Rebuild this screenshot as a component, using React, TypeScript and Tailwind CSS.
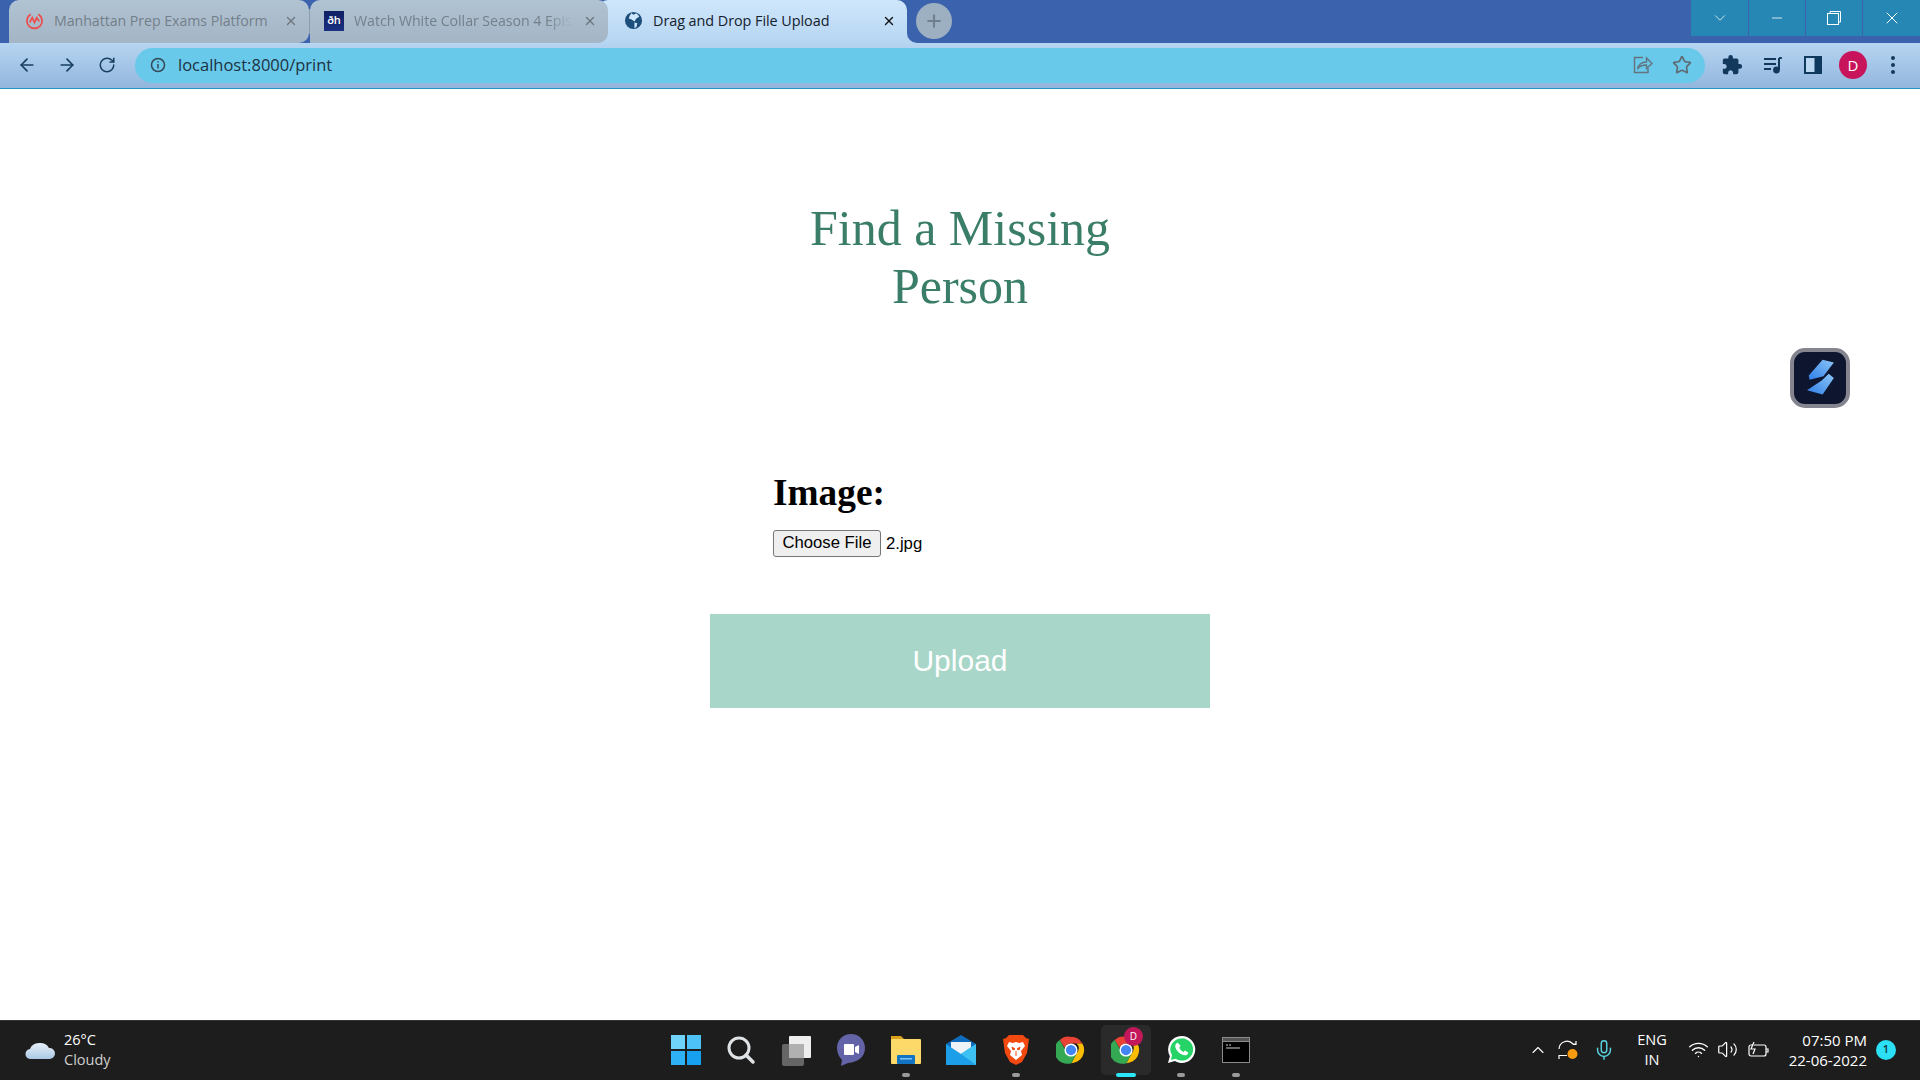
import React from "react";
import { ArrowLeft, ArrowRight, RotateCw, Star, ChevronDown, Minus, X, Plus, Mic, ChevronUp, Wifi, Volume2 } from "lucide-react";
import { MdExtension } from "react-icons/md";

const ui = "font-['Open_Sans','Noto_Sans',sans-serif]";

function ChromeIcon({ size = 32 }: { size?: number }) {
  return (
    <svg width={size} height={size} viewBox="0 0 48 48">
      <path d="M24 3a21 21 0 0 1 18.2 10.5H24a10.5 10.5 0 0 0-10 7.2L6 7.9A21 21 0 0 1 24 3z" fill="#ea4335" />
      <path d="M42.2 13.5A21 21 0 0 1 24.6 45L33.2 29A10.5 10.5 0 0 0 33 13.5z" fill="#fbbc04" />
      <path d="M24.6 45A21 21 0 0 1 6 7.9L15 24a10.5 10.5 0 0 0 18.2 5z" fill="#34a853" />
      <circle cx="24" cy="24" r="10.5" fill="#fff" />
      <circle cx="24" cy="24" r="8.2" fill="#4285f4" />
    </svg>
  );
}

function Tab({ icon, title, active, fade }: { icon: React.ReactNode; title: string; active?: boolean; fade?: boolean }) {
  return (
    <div className={active
      ? "relative -ml-[10px] flex h-[43px] w-[309px] items-center rounded-t-[10px] bg-gradient-to-b from-[#cfe7fc] to-[#b6d5f1] pb-[2px] pl-[25px] pr-[11px]"
      : fade
        ? "relative z-10 flex h-[43px] w-[298px] items-center rounded-t-[10px] rounded-br-[10px] bg-gradient-to-b from-[#b0c3d3] to-[#a4b5c5] pb-[2px] pl-[14px] pr-[11px]"
        : "relative z-10 flex h-[43px] w-[300px] items-center rounded-t-[10px] rounded-br-[10px] bg-gradient-to-b from-[#b0c3d3] to-[#a4b5c5] pb-[2px] pl-[15px] pr-[11px]"}>
      <span className="flex w-[20px] shrink-0 justify-center">{icon}</span>
      <span className={(active
        ? "ml-[10px] w-[219px] overflow-hidden whitespace-nowrap text-[14.4px] tracking-[-0.05px] text-[#14202c]"
        : "ml-[10px] w-[219px] overflow-hidden whitespace-nowrap text-[14.2px] tracking-[-0.05px] text-[#747f89]")
        + (fade ? " [mask-image:linear-gradient(to_right,black_88%,transparent)]" : "")}>{title}</span>
      <X size={14} strokeWidth={2.4} className={active ? "ml-auto text-[#111]" : "ml-auto text-[#6d757d]"} />
      {active && (
        <div className="absolute bottom-0 right-[-10px] h-[10px] w-[10px] bg-[#b6d5f1]">
          <div className="h-full w-full rounded-bl-[10px] bg-[#3a62ad]" />
        </div>
      )}
    </div>
  );
}

function TaskIcon({ children, mark, selected }: { children: React.ReactNode; mark?: "run" | "active"; selected?: boolean }) {
  return (
    <div className="relative flex h-[59px] w-[55px] items-center justify-center pb-[2px]">
      {selected && <div className="absolute left-[2px] top-[4px] h-[50px] w-[50px] rounded-[5px] bg-[#2a2a2a]" />}
      <div className="relative flex h-[36px] w-[36px] items-center justify-center">{children}</div>
      {mark === "run" && <div className="absolute bottom-[3px] left-[23px] h-[4px] w-[8px] rounded-full bg-[#9a9a9a]" />}
      {mark === "active" && <div className="absolute bottom-[3px] left-[17px] h-[4px] w-[20px] rounded-full bg-[#2be6f7]" />}
    </div>
  );
}

export default function App() {
  return (
    <div className={"flex h-screen w-full flex-col overflow-hidden bg-white " + ui}>
      {/* tab strip */}
      <div className="flex h-[43px] shrink-0 items-start bg-[#3a62ad]">
        <div className="ml-[9px] flex">
          <Tab title="Manhattan Prep Exams Platform" icon={
            <svg width="19" height="19" viewBox="0 0 20 20" fill="none" stroke="#ef4a4a" strokeWidth="1.8">
              <path d="M6 3.4A8 8 0 1 0 14 3.4" /><path d="M5 12l2.6-5 2.4 5 2.4-5 2.6 4" />
            </svg>} />
          <div className="relative z-20 my-[9px] w-px bg-[#8e9dab]" />
          <Tab fade title="Watch White Collar Season 4 Epis" icon={
            <span className="flex h-[20px] w-[20px] items-center justify-center bg-gradient-to-b from-[#0f1f63] to-[#1a2f80] text-[11px] font-semibold text-white">ðh</span>} />
          <Tab active title="Drag and Drop File Upload" icon={
            <svg width="19" height="19" viewBox="0 0 20 20">
              <circle cx="10" cy="10" r="9" fill="#1d4f7c" />
              <path d="M8 2c1 2 3 2 4 1s3 1 4 3l-3 2-2 3-3-2-3-1 1-3zM11 12l3 1-1 4-2 1z" fill="#cfe7fc" />
            </svg>} />
        </div>
        <div className="ml-[9px] mt-[3px] flex h-[36px] w-[36px] items-center justify-center rounded-full bg-[#9db0c2]">
          <Plus size={20} strokeWidth={2.5} className="text-[#6f7f8e]" />
        </div>
        <div className="ml-auto flex h-[36px] bg-[#2687b4] text-white">
          <div className="flex h-full w-[58px] items-center justify-center border-r border-[#3a62ad]"><ChevronDown size={18} strokeWidth={1} /></div>
          <div className="flex h-full w-[57px] items-center justify-center border-r border-[#3a62ad]"><Minus size={16} strokeWidth={1.2} /></div>
          <div className="flex h-full w-[57px] items-center justify-center border-r border-[#3a62ad]">
            <svg width="14" height="14" viewBox="0 0 14 14" fill="none" stroke="#fff"><rect x="0.5" y="2.5" width="11" height="11" /><path d="M3 2.5V.5h10.500V11h-2" /></svg>
          </div>
          <div className="flex h-full w-[57px] items-center justify-center"><X size={20} strokeWidth={1.2} /></div>
        </div>
      </div>

      {/* toolbar */}
      <div className="flex h-[46px] shrink-0 items-center border-b-[1px] border-[#2196c4] bg-gradient-to-b from-[#b6d5f1] to-[#93b6de] pb-[1px]">
        <div className="flex w-[135px] items-center pl-[17px] text-[#18405f]">
          <ArrowLeft size={20} strokeWidth={2} />
          <ArrowRight size={20} strokeWidth={2} className="ml-[20px]" />
          <RotateCw size={18} strokeWidth={2} className="ml-[21px]" />
        </div>
        <div className="flex h-[35px] w-[1570px] items-center rounded-full bg-[#68c9ea]">
          <svg width="16" height="16" viewBox="0 0 16 16" fill="none" stroke="#34495a" strokeWidth="1.5" className="ml-[15px]">
            <circle cx="8" cy="8" r="6.5" /><path d="M8 7v4.500M8 4.200v1.400" />
          </svg>
          <span className="ml-[12px] text-[16.5px] text-[#1d3242]">localhost:8000/print</span>
          <svg width="20" height="20" viewBox="0 0 20 20" fill="none" stroke="#63747f" strokeWidth="1.4" className="ml-auto">
            <path d="M10 2.500H1.500v15H15V13" /><path d="M4.500 14c.5-4 4-7 9-7V3l5.500 5.500-5.500 5V10c-4 0-7 1-9 4z" />
          </svg>
          <Star size={20} strokeWidth={2} className="ml-[19px] mr-[13px] text-[#5f6b73]" />
        </div>
        <MdExtension size={22} className="ml-[16px] text-[#12395c]" />
        <svg width="20" height="18" viewBox="0 0 20 18" fill="none" stroke="#12395c" strokeWidth="1.8" className="ml-[20px]">
          <path d="M1 3h12M1 8h12M1 13h7" /><path d="M16 2v12" strokeWidth="2" /><path d="M16 2h3" /><circle cx="13.500" cy="14" r="2.500" fill="#12395c" />
        </svg>
        <svg width="18" height="18" viewBox="0 0 18 18" className="ml-[21px]">
          <rect width="18" height="18" fill="#0f3a5e" /><rect x="2" y="2" width="8.500" height="14" fill="#bcd8f0" />
        </svg>
        <div className="ml-[17px] flex h-[28px] w-[28px] items-center justify-center rounded-full bg-[#c8145a] text-[15px] text-white">D</div>
        <div className="ml-[24px] flex flex-col gap-[3px]">
          <span className="h-[4px] w-[4px] rounded-full bg-[#12395c]" />
          <span className="h-[4px] w-[4px] rounded-full bg-[#12395c]" />
          <span className="h-[4px] w-[4px] rounded-full bg-[#12395c]" />
        </div>
      </div>

      {/* page */}
      <main className="relative flex-1">
        <div className="mx-auto w-[500px] pt-[110px] font-['Liberation_Serif',serif]">
          <h1 className="mx-auto w-[340px] text-center text-[50px] font-normal leading-[58px] text-[#3a7d68]">Find a Missing Person</h1>
          <div className="mt-[157px] pl-[63px]">
            <div className="text-[37.3px] font-bold leading-[41px] text-black">Image:</div>
            <div className="mt-[17px] flex items-center font-['Liberation_Sans',sans-serif] text-[16.7px] text-black">
              <button className="h-[27px] w-[108px] rounded-[3px] border border-[#767676] bg-[#efefef] pb-[2px] text-[16.7px] leading-[20px]">Choose File</button>
              <span className="ml-[5px]">2.jpg</span>
            </div>
          </div>
          <button className="mt-[57px] h-[94px] w-[500px] bg-[#a8d6c8] pb-[2px] font-['Liberation_Sans',sans-serif] text-[30px] text-white">Upload</button>
        </div>
        <div className="absolute left-[1790px] top-[259px] flex h-[60px] w-[60px] items-center justify-center rounded-[15px] border-[4px] border-[#85858f] bg-[#0e152e]">
          <svg width="52" height="52" viewBox="0 0 60 60">
            <defs>
              <linearGradient id="bolt" x1="0" y1="1" x2="1" y2="0"><stop offset="0" stopColor="#2f7fe8" /><stop offset="1" stopColor="#8cc6f8" /></linearGradient>
            </defs>
            <path d="M33 9 46 12 34 28 18 32 17 27z" fill="url(#bolt)" />
            <path d="M40 25 46 30 33 49 15 44 32 33z" fill="url(#bolt)" />
          </svg>
        </div>
      </main>

      {/* taskbar */}
      <footer className="grid h-[60px] shrink-0 grid-cols-[1fr_605px_1fr] border-t border-[#333] bg-[#1d1d1d] text-white">
        <div className="flex items-center pb-[2px] pl-[25px]">
          <svg width="31" height="20" viewBox="0 0 31 20">
            <defs><linearGradient id="cloud" x1="0" y1="0" x2="0" y2="1"><stop offset="0" stopColor="#e8f0f8" /><stop offset="1" stopColor="#a9c8e4" /></linearGradient></defs>
            <path d="M6 19a5 5 0 0 1-1-10 10 8 0 0 1 19-1 5.500 5.500 0 0 1 1 11z" fill="url(#cloud)" />
          </svg>
          <div className="ml-[8px] text-[14.5px] leading-[20px]">
            <div>26°C</div>
            <div className="text-[#cfcfcf]">Cloudy</div>
          </div>
        </div>

        <div className="flex translate-x-[1px] items-center">
          <TaskIcon>
            <div className="grid grid-cols-2 gap-[2px]">
              <span className="h-[14px] w-[14px] bg-[#6fd3fa]" /><span className="h-[14px] w-[14px] bg-[#4cc2f7]" />
              <span className="h-[14px] w-[14px] bg-[#2fb2f5]" /><span className="h-[14px] w-[14px] bg-[#18a0f0]" />
            </div>
          </TaskIcon>
          <TaskIcon>
            <svg width="30" height="30" viewBox="0 0 30 30" fill="none" stroke="#dfe3e6"><circle cx="13" cy="13" r="10" strokeWidth="3" /><path d="M20 20l7 7" strokeWidth="3.500" strokeLinecap="round" /></svg>
          </TaskIcon>
          <TaskIcon>
            <svg width="32" height="32" viewBox="0 0 32 32">
              <rect x="2" y="10" width="22" height="22" rx="2" fill="#666" />
              <rect x="9" y="2" width="22" height="22" rx="1" fill="#eee" />
              <rect x="9" y="10" width="15" height="14" fill="#b0b0b0" />
            </svg>
          </TaskIcon>
          <TaskIcon>
            <svg width="30" height="34" viewBox="0 0 30 34">
              <path d="M15 1c8 0 14 6 14 14 0 9-7 14-17 15l-7 3 1-6C3 24 1 20 1 15 1 7 7 1 15 1z" fill="#6264a7" />
              <rect x="8" y="11" width="10" height="11" rx="1" fill="#fff" /><path d="M19 14l4-2v9l-4-2z" fill="#fff" />
            </svg>
          </TaskIcon>
          <TaskIcon mark="run">
            <svg width="30" height="30" viewBox="0 0 30 30">
              <path d="M0 1h10l3 3v3H0z" fill="#d9a11c" /><rect y="4" width="30" height="25" rx="1" fill="#fcd968" />
              <rect x="6" y="20" width="18" height="9" rx="1" fill="#1474c4" /><rect x="9" y="23" width="12" height="1.500" fill="#7cc4f5" />
            </svg>
          </TaskIcon>
          <TaskIcon>
            <svg width="30" height="30" viewBox="0 0 30 30">
              <path d="M15 0 30 9v21H0V9z" fill="#0f6cbd" /><path d="M5 7h20v11l-10 5-10-5z" fill="#eef3f8" />
              <path d="M0 9l15 10 15-10v21H0z" fill="#1d9ee8" /><path d="M15 19 30 9v21z" fill="#3dc0f2" />
            </svg>
          </TaskIcon>
          <TaskIcon mark="run">
            <svg width="28" height="32" viewBox="0 0 28 32">
              <path d="M7 1h14l3 3 3 1-2 14-5 9-6 3-6-3-5-9L1 5l3-1z" fill="#f1490f" />
              <path d="M7 8l4 1 3-1 3 1 4-1 2 4-4 5 1 4-6 5-6-5 1-4-4-5z" fill="#fff" />
              <path d="M10 13l3 2-2 1zM18 13l-3 2 2 1zM14 17v5" stroke="#f1490f" strokeWidth="1" fill="#f1490f" />
            </svg>
          </TaskIcon>
          <TaskIcon><ChromeIcon size={30} /></TaskIcon>
          <TaskIcon mark="active" selected>
            <ChromeIcon size={30} />
            <span className="absolute left-[16px] top-[-5px] flex h-[19px] w-[19px] items-center justify-center rounded-full bg-[#c2185b] text-[10px] text-white">D</span>
          </TaskIcon>
          <TaskIcon mark="run">
            <svg width="29" height="29" viewBox="0 0 30 30">
              <path d="M15 1a14 14 0 0 0-12 21L1 29l7-2A14 14 0 1 0 15 1z" fill="#fff" />
              <path d="M15 3.500a11.500 11.500 0 0 0-9.800 17.500L4 25.800l5-1.300A11.500 11.500 0 1 0 15 3.500z" fill="#25d366" />
              <path d="M11 8c-1 0-2.500 1.500-2.500 3.500 0 4 5 9.500 10 9.500 2 0 3.500-1.500 3.500-3l-3.500-2-1.500 1.500c-2-.8-3.500-2.500-4.300-4.300L14 11z" fill="#fff" />
            </svg>
          </TaskIcon>
          <TaskIcon mark="run">
            <svg width="28" height="26" viewBox="0 0 28 26">
              <rect width="28" height="26" fill="#8a8a8a" /><rect x="1" y="5" width="26" height="20" fill="#000" /><rect x="1" y="1" width="26" height="3" fill="#555" />
              <path d="M4 8h2M7 8h2M4 11h14" stroke="#ccc" strokeWidth="1" />
            </svg>
          </TaskIcon>
        </div>

        <div className="flex items-center justify-end pb-[2px] text-[14.5px]">
          <ChevronUp size={20} strokeWidth={1.300} />
          <svg width="22" height="22" viewBox="0 0 22 22" fill="none" stroke="#fff" strokeWidth="1.200" className="ml-[9px]">
            <path d="M2 10a8 8 0 0 1 14-5h3M19 2v3.500h-3" /><path d="M2 20v-3.500h3.500M2 16.500h8" />
            <circle cx="15.500" cy="15" r="5" fill="#f79a0e" stroke="none" />
          </svg>
          <Mic size={22} strokeWidth={1.600} className="ml-[14px] text-[#58d1dc]" />
          <div className="ml-[18px] w-[38px] text-center leading-[20px]"><div>ENG</div><div>IN</div></div>
          <Wifi size={21} strokeWidth={1.600} className="ml-[17px]" />
          <Volume2 size={21} strokeWidth={1.400} className="ml-[8px]" />
          <svg width="22" height="18" viewBox="0 0 22 18" fill="none" stroke="#fff" strokeWidth="1.200" className="ml-[10px]">
            <rect x="1" y="4" width="17" height="11" rx="2" /><path d="M18 8h2v3h-2" /><path d="M6 1 3 8h4l-2 5" fill="#1d1d1d" />
          </svg>
          <div className="ml-[17px] w-[80px] whitespace-nowrap text-right text-[15px] leading-[20px]"><div>07:50 PM</div><div>22-06-2022</div></div>
          <span className="ml-[9px] mr-[24px] flex h-[20px] w-[20px] items-center justify-center rounded-full bg-[#2be0f5] text-[11px] font-semibold text-[#12323c]">1</span>
        </div>
      </footer>
    </div>
  );
}
